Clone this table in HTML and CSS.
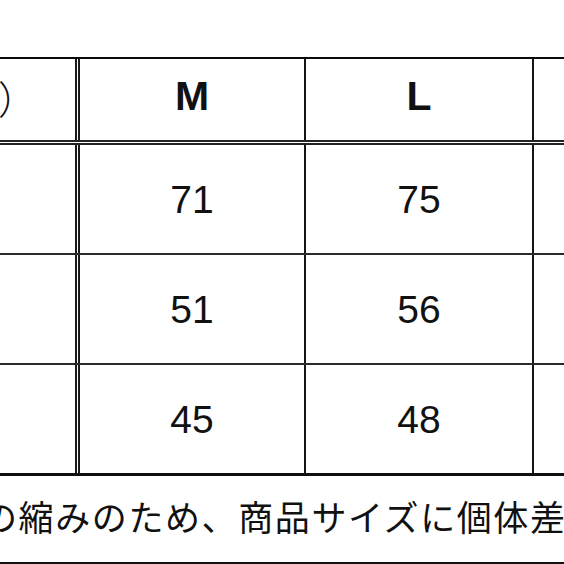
FILE: index.html
```html
<!DOCTYPE html>
<html lang="ja">
<head>
<meta charset="utf-8">
<link rel="stylesheet" href="styles.css">
</head>
<body>
<div class="page">
  <div class="chart">
    <div class="row head">
      <div class="cell first"><span class="unit">（cm）</span></div>
      <div class="cell size">M</div>
      <div class="cell size">L</div>
      <div class="cell size"></div>
    </div>
    <div class="row">
      <div class="cell first"></div>
      <div class="cell">71</div>
      <div class="cell">75</div>
      <div class="cell"></div>
    </div>
    <div class="row">
      <div class="cell first"></div>
      <div class="cell">51</div>
      <div class="cell">56</div>
      <div class="cell"></div>
    </div>
    <div class="row last">
      <div class="cell first"></div>
      <div class="cell">45</div>
      <div class="cell">48</div>
      <div class="cell"></div>
    </div>
  </div>
  <div class="note"><span>の縮みのため、商品サイズに個体差が</span></div>
</div>
</body>
</html>
```

FILE: styles.css
```css
html, body {
  margin: 0;
  padding: 0;
  background: #ffffff;
  overflow: hidden;
}
.page {
  width: 564px;
  height: 564px;
  overflow: hidden;
  padding-top: 57px;
  box-sizing: border-box;
  display: flex;
  flex-direction: column;
}
.chart {
  margin-left: -123px;
  border-top: 2px solid #0a0a0a;
  border-bottom: 3px solid #111;
  width: 900px;
}
.row {
  display: grid;
  grid-template-columns: 203px 226px 228px 243px;
  height: 110px;
  border-bottom: 2px solid #2a2a2a;
  box-sizing: border-box;
}
.row.head {
  height: 86px;
  border-bottom: 5px double #222;
}
.row.last {
  border-bottom: none;
  height: 108px;
}
.cell {
  box-sizing: border-box;
  border-right: 2px solid #151515;
  display: flex;
  align-items: center;
  justify-content: center;
  font-family: "Liberation Sans", Arial, sans-serif;
  font-size: 39px;
  color: #111;
  padding-top: 2px;
}
.cell.first {
  border-right: 5px double #1a1a1a;
  justify-content: flex-end;
  padding-right: 38px;
}
.head .cell {
  padding-top: 0;
  padding-bottom: 6px;
}
.cell.size {
  font-weight: bold;
  font-size: 41px;
}
.unit {
  font-family: "Noto Sans CJK JP", sans-serif;
  font-size: 39px;
  font-weight: 300;
}
.note {
  flex: 1;
  border-bottom: 2px solid #111;
  display: flex;
  align-items: center;
  white-space: nowrap;
  overflow: hidden;
  padding-bottom: 8px;
}
.note span {
  font-family: "Noto Sans CJK JP", sans-serif;
  font-size: 35px;
  color: #111;
  letter-spacing: 1.6px;
  margin-left: -18px;
}
```
